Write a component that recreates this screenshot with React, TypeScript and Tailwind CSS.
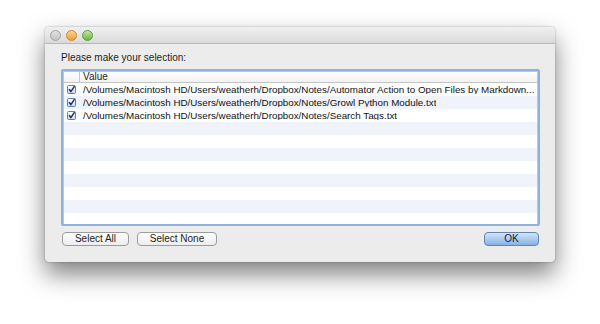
import React from "react";

const FILES = [
  "/Volumes/Macintosh HD/Users/weatherh/Dropbox/Notes/Automator Action to Open Files by Markdown...",
  "/Volumes/Macintosh HD/Users/weatherh/Dropbox/Notes/Growl Python Module.txt",
  "/Volumes/Macintosh HD/Users/weatherh/Dropbox/Notes/Search Tags.txt",
];

const ROWS = 11;

function Check() {
  return (
    <svg width="9" height="9" viewBox="0 0 9 9" className="shrink-0">
      <defs>
        <linearGradient id="cb" x1="0" y1="0" x2="0" y2="1">
          <stop offset="0" stopColor="#ffffff" />
          <stop offset="1" stopColor="#c9d9ee" />
        </linearGradient>
      </defs>
      <rect x="0.5" y="0.5" width="8" height="8" rx="1" fill="url(#cb)" stroke="#5f7fa8" />
      <path d="M2 4.3 L3.9 6.6 L7.6 1.2" fill="none" stroke="#1b2f66" strokeWidth="1.5" />
    </svg>
  );
}

function Light({ cls }: { cls: string }) {
  return <div className={`w-[11px] h-[11px] rounded-full border ${cls}`} />;
}

export default function App() {
  return (
    <div
      className="w-[600px] h-[324px] bg-white pl-[45px] pt-[27px] overflow-hidden"
      style={{ fontFamily: '"Liberation Sans", Arial, sans-serif' }}
    >
      <div className="w-[510px] h-[235px] bg-[#ececec] rounded-[4px] flex flex-col shadow-[0_12px_24px_rgba(0,0,0,0.5),0_0_2px_rgba(0,0,0,0.35)] overflow-hidden">
        {/* Title bar */}
        <div className="h-[17px] shrink-0 flex items-center gap-[5px] pl-[5px] bg-gradient-to-b from-[#f0f0f0] to-[#dadada] border-b border-[#b9b9b9]">
          <Light cls="bg-gradient-to-b from-[#e2e2e2] to-[#c4c4c4] border-[#a2a2a2]" />
          <Light cls="bg-gradient-to-b from-[#fbd68a] to-[#ec9f22] border-[#c9862a]" />
          <Light cls="bg-gradient-to-b from-[#c3e6a2] to-[#6cb540] border-[#5e9a3a]" />
        </div>

        {/* Body */}
        <div className="flex-1 flex flex-col pl-[16px] pr-[15px]">
          <p className="text-[10px] text-[#1e1e1e] leading-none pt-[9px] pl-[0px] h-[25px]">
            Please make your selection:
          </p>

          <div className="h-[157px] border-2 border-[#8db2dc] rounded-[2px] bg-white overflow-hidden">
            <div className="h-full border border-[#b9c7d8] flex flex-col">
              <div className="h-[11px] shrink-0 flex items-center border-b border-[#c4c4c4] bg-gradient-to-b from-white to-[#f2f2f2] text-[10px] text-[#1e1e1e] leading-none">
                <div className="w-[16px] h-full border-r border-[#c8c8c8]" />
                <span className="pl-[3px]">Value</span>
              </div>
              {Array.from({ length: ROWS }).map((_, i) => (
                <div
                  key={i}
                  className={`h-[13px] shrink-0 flex items-center text-[9.8px] text-[#111] leading-none ${
                    i % 2 === 1 ? "bg-[#f0f4fa]" : "bg-white"
                  }`}
                >
                  {FILES[i] && (
                    <>
                      <div className="w-[19px] shrink-0 pl-[3px] flex items-center">
                        <Check />
                      </div>
                      <span className="min-w-0 whitespace-nowrap overflow-hidden">{FILES[i]}</span>
                    </>
                  )}
                </div>
              ))}
            </div>
          </div>

          <div className="flex items-center pt-[6px] pl-[1px]">
            <button className="w-[67px] h-[14px] rounded-[4px] border border-[#9c9c9c] bg-gradient-to-b from-white to-[#ededed] text-[10px] leading-none text-[#1e1e1e]">
              Select All
            </button>
            <button className="ml-[8px] w-[80px] h-[14px] rounded-[4px] border border-[#9c9c9c] bg-gradient-to-b from-white to-[#ededed] text-[10px] leading-none text-[#1e1e1e]">
              Select None
            </button>
            <button className="ml-auto mr-[1px] w-[55px] h-[14px] rounded-[4px] border border-[#5f86b8] bg-gradient-to-b from-[#d3e4f7] to-[#86b2e6] text-[10px] leading-none text-[#10203a]">
              OK
            </button>
          </div>
        </div>
      </div>
    </div>
  );
}
